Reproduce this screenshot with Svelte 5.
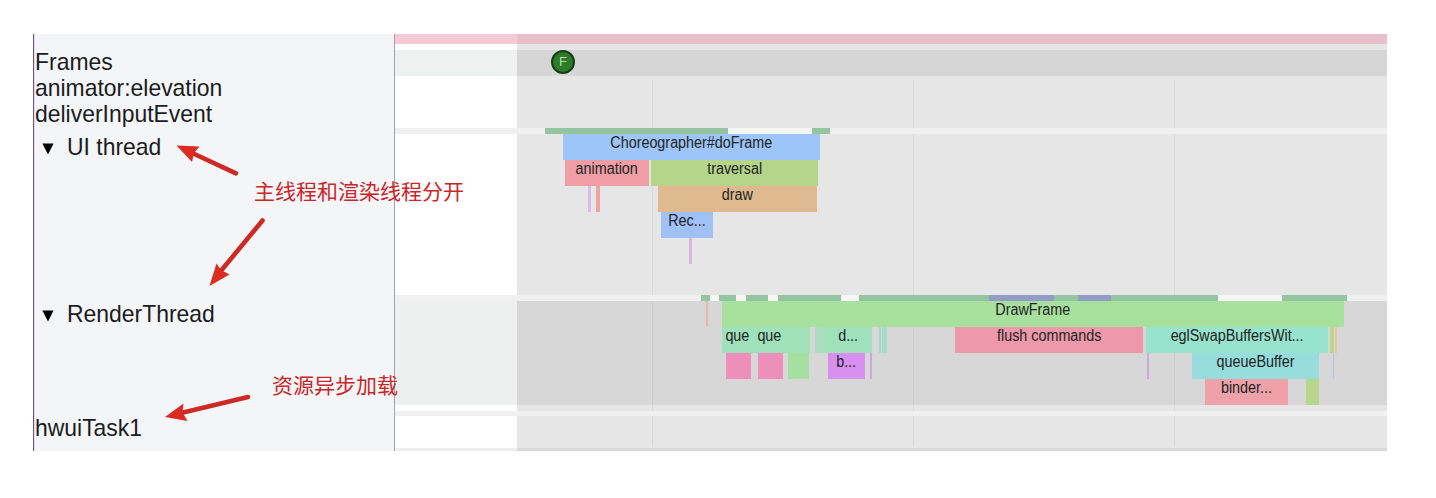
<script>
  const ORIGIN = 395;
  const gridTimes = [652, 913, 1174];

  // Each slice: [start, end, colour, label]
  const uiState = [[545, 728, '#95c4a1'], [728, 812, '#f5f5f5'], [812, 830, '#95c4a1']];
  const uiRows = [
    [[563, 820, '#9ec5f8', 'Choreographer#doFrame']],
    [[565, 649, '#ee9ea4', 'animation'], [651, 818, '#b5d68a', 'traversal']],
    [[587.5, 590.5, '#d5bde6'], [596, 600, '#eca3a8'], [658, 817, '#dfb990', 'draw']],
    [[661, 713, '#a0c1f6', 'Rec...']],
    [[688.5, 691.5, '#d9b5e2']]
  ];
  const renderState = [
    [701, 710, '#95c4a1'], [710, 719, '#f7f7f7'], [719, 736, '#95c4a1'],
    [736, 746, '#f7f7f7'], [746, 768, '#95c4a1'], [768, 778, '#f7f7f7'],
    [778, 841, '#95c4a1'], [841, 859, '#f7f7f7'], [859, 989, '#95c4a1'],
    [989, 1054, '#919cc7'], [1054, 1078, '#95c4a1'], [1078, 1111, '#919cc7'],
    [1111, 1218, '#95c4a1'], [1218, 1282, '#f7f7f7'], [1282, 1347, '#95c4a1']
  ];
  const renderRows = [
    [[706, 708, '#e5b7b8'], [722, 1344, '#a8e09e', 'DrawFrame']],
    [
      [722, 753, '#9fe1ba', 'que'], [753, 786, '#9fe1ba', 'que'], [786, 810, '#a0e1b7'],
      [815, 824, '#a9dfbe'], [824, 872, '#9fe1ba', 'd...'], [879, 881, '#9adcc8'], [882, 887, '#a6dccb'],
      [955, 1142.5, '#ee98ab', 'flush commands'],
      [1146, 1328, '#98e3cd', 'eglSwapBuffersWit...'], [1330, 1334, '#b9d78f'], [1335, 1337, '#e7c69e']
    ],
    [
      [726, 751, '#ee8ebb'], [757.5, 783, '#ee8ebb'], [788, 809, '#a4dfa0'],
      [828, 864.5, '#d78ff0', 'b...'], [870, 872, '#d0a4e0'], [1147, 1149, '#cda9d9'],
      [1192, 1319, '#97dddd', 'queueBuffer'], [1332.5, 1334, '#a9c8ea']
    ],
    [[1205, 1287.5, '#eea1a8', 'binder...'], [1306, 1319, '#b8d78b']]
  ];

  function place(row) {
    return row.map(([start, end, color, label], i) => ({
      gap: start - (i ? row[i - 1][1] : ORIGIN),
      width: end - start,
      color,
      label
    }));
  }
</script>

{#snippet slices(row)}
  {#each place(row) as s}
    <div class="slice" style="margin-left:{s.gap}px;width:{s.width}px;background:{s.color}">
      {#if s.label}<span class="label">{s.label}</span>{/if}
    </div>
  {/each}
{/snippet}

<main class="trace">
  <aside class="names">
    <div class="name"><span>Frames</span></div>
    <div class="name"><span>animator:elevation</span></div>
    <div class="name"><span>deliverInputEvent</span></div>
    <div class="name thread ui">
      <svg width="12" height="12" viewBox="0 0 12 12"><path d="M.4.5H11.6L6 11.5Z" /></svg>
      <span>UI thread</span>
    </div>
    <div class="name thread render">
      <svg width="12" height="12" viewBox="0 0 12 12"><path d="M.4.5H11.6L6 11.5Z" /></svg>
      <span>RenderThread</span>
    </div>
    <div class="name task"><span>hwuiTask1</span></div>
  </aside>

  <section class="timeline">
    <div class="alert"></div>
    <div class="space six"></div>
    <div class="frames"><span class="frame">F</span></div>
    <div class="space events"></div>
    <div class="strip">{@render slices(uiState)}</div>
    <div class="space ui-track">
      {#each uiRows as row}<div class="row">{@render slices(row)}</div>{/each}
    </div>
    <div class="strip">{@render slices(renderState)}</div>
    <div class="render-track">
      {#each renderRows as row}<div class="row">{@render slices(row)}</div>{/each}
    </div>
    <div class="space six"></div>
    <div class="strip thin"></div>
    <div class="space task-track"></div>
    <div class="end"></div>
    {#each gridTimes as t}<i class="gridline" style="left:{t - ORIGIN}px"></i>{/each}
  </section>

  <svg class="arrows" width="1354" height="417" viewBox="33 34 1354 417">
    <g stroke="#cd2925" stroke-width="4.6" stroke-linecap="round">
      <path d="M236 173.300L190 152" />
      <path d="M262.500 220.500L220 272" />
      <path d="M248 397L181 413" />
    </g>
    <g fill="#dc2b22">
      <path d="M176.500 145.500L199.500 146.500L194 153L192 162Z" />
      <path d="M209.500 286L216.500 263.500L221 270L229.500 274.500Z" />
      <path d="M165 417L183.500 403.500L182.500 412.500L187.500 421Z" />
    </g>
  </svg>
  <p class="note threads">主线程和渲染线程分开</p>
  <p class="note async">资源异步加载</p>
</main>

<style>
  :global(body) {
    background: #fff;
  }
  .trace {
    position: relative;
    display: flex;
    width: 1354px;
    height: 417px;
    margin: 34px 0 0 33px;
    font-family: "Liberation Sans", sans-serif;
    overflow: hidden;
  }
  .names {
    box-sizing: border-box;
    flex: none;
    width: 362px;
    padding-top: 15px;
    border-left: 1px solid #75557f;
    border-right: 1px solid #a0a2a2;
    background: #f3f5f7;
    box-shadow: inset 1px 0 #e6d9ec;
    color: #1b1c1d;
  }
  .name {
    height: 26px;
    padding-left: 1px;
    font-size: 24px;
    line-height: 26px;
    white-space: nowrap;
  }
  .name span {
    display: inline-block;
    transform: scaleX(0.955);
    transform-origin: left center;
  }
  .thread {
    display: flex;
    align-items: center;
    gap: 13px;
    padding-left: 8px;
  }
  .thread svg {
    flex: none;
    margin-top: 3px;
    fill: #000;
  }
  .ui {
    margin-top: 7px;
  }
  .render {
    margin-top: 141px;
  }
  .task {
    margin-top: 88px;
  }
  .timeline {
    position: relative;
    flex: 1;
    min-width: 0;
  }
  .space {
    background: linear-gradient(90deg, #fff 122px, #e6e6e6 122px);
  }
  .alert {
    height: 10px;
    background: linear-gradient(90deg, #f5cad7 122px, #e9bfcc 122px);
  }
  .six {
    height: 6px;
  }
  .frames {
    height: 26px;
    padding-left: 156px;
    background: linear-gradient(90deg, #eff1f1 122px, #d6d6d6 122px);
  }
  .frame {
    display: block;
    box-sizing: border-box;
    width: 24px;
    height: 24px;
    border: 2px solid #173d16;
    border-radius: 50%;
    background: #2b7b28;
    color: #b6dfad;
    font-size: 13px;
    line-height: 20px;
    text-align: center;
  }
  .events {
    height: 52px;
  }
  .strip {
    position: relative;
    z-index: 1;
    display: flex;
    height: 6px;
    background: #f0f0f0;
  }
  .thin {
    height: 5px;
  }
  .ui-track {
    height: 161px;
  }
  .render-track {
    height: 104px;
    background: linear-gradient(90deg, #eef0f0 122px, #d7d7d7 122px);
  }
  .task-track {
    height: 32px;
  }
  .end {
    height: 3px;
    background: linear-gradient(90deg, #eee 122px, #d9d9d9 122px);
  }
  .row {
    position: relative;
    z-index: 1;
    display: flex;
    height: 26px;
  }
  .slice {
    display: flex;
    justify-content: center;
    flex: none;
    color: #1d2422;
    font-size: 16px;
    line-height: 18px;
    white-space: nowrap;
  }
  .label {
    flex: none;
    height: 18px;
    transform: scaleX(0.897);
  }
  .gridline {
    position: absolute;
    top: 46px;
    bottom: 5px;
    width: 1px;
    background: rgba(150, 150, 150, 0.14);
  }
  .arrows {
    position: absolute;
    inset: 0;
  }
  .note {
    position: absolute;
    margin: 0;
    color: #c9262b;
    font-family: "Noto Sans CJK SC", sans-serif;
    font-size: 21px;
    line-height: 30px;
    white-space: nowrap;
  }
  .threads {
    left: 221px;
    top: 141px;
  }
  .async {
    left: 239px;
    top: 335px;
  }
</style>
